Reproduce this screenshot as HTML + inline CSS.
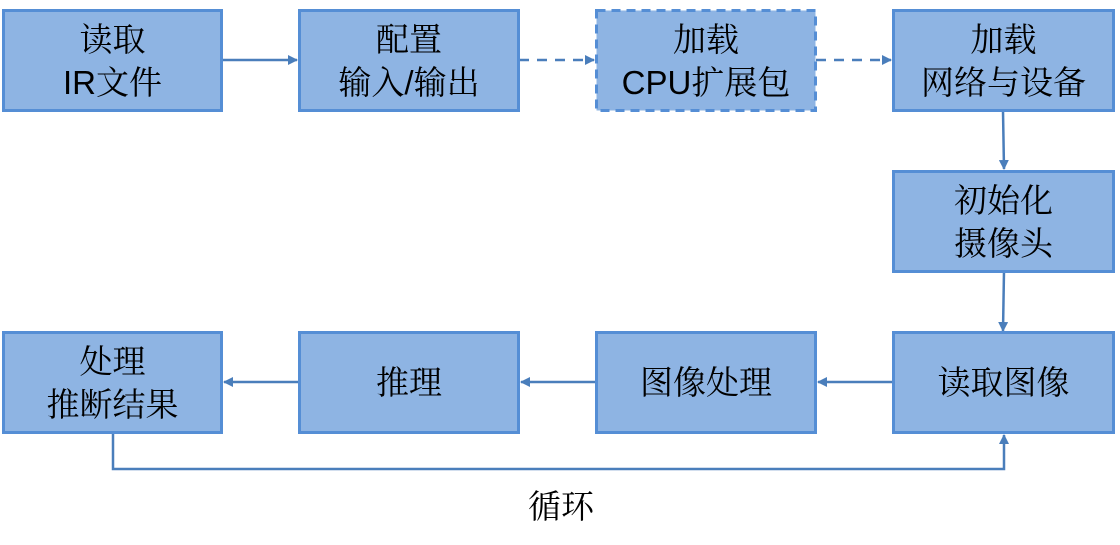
<!DOCTYPE html>
<html><head><meta charset="utf-8"><style>
body{margin:0;width:1120px;height:545px;background:#fff;position:relative;overflow:hidden;font-family:"Liberation Sans","Noto Serif CJK SC","Noto Serif CJK JP",serif;}
.b{position:absolute;box-sizing:border-box;background:#8eb4e3;border:3px solid #558ed5;display:flex;align-items:center;justify-content:center;text-align:center;font-size:33px;line-height:43px;color:#000;}
.d{border:none;background:transparent;}
.t{position:absolute;font-size:33px;}
</style></head><body>
<svg width="1120" height="545" style="position:absolute;left:0;top:0">
<defs><marker id="a" markerWidth="10" markerHeight="10" refX="9" refY="5" orient="auto" markerUnits="userSpaceOnUse"><path d="M0,0 L10,5 L0,10 z" fill="#4a7ebb"/></marker></defs>
<rect x="596.5" y="10.5" width="219" height="100" fill="#8eb4e3" stroke="#558ed5" stroke-width="3" stroke-dasharray="9,6"/>
<g stroke="#4a7ebb" stroke-width="2.5" fill="none">
<line x1="222" y1="60" x2="297" y2="60" marker-end="url(#a)"/>
<line x1="519" y1="60" x2="594" y2="60" stroke-dasharray="10,8" marker-end="url(#a)"/>
<line x1="816" y1="60" x2="891" y2="60" stroke-dasharray="10,8" marker-end="url(#a)"/>
<line x1="1003" y1="111" x2="1004" y2="169" marker-end="url(#a)"/>
<line x1="1004" y1="271" x2="1003" y2="331" marker-end="url(#a)"/>
<line x1="893" y1="382" x2="818" y2="382" marker-end="url(#a)"/>
<line x1="596" y1="382" x2="521" y2="382" marker-end="url(#a)"/>
<line x1="298" y1="382" x2="224" y2="382" marker-end="url(#a)"/>
<polyline points="113,433 113,469 1004,469 1004,435" marker-end="url(#a)"/>
</g></svg>
<div class="b" style="left:2px;top:9px;width:221px;height:103px">读取<br>IR文件</div>
<div class="b" style="left:298px;top:9px;width:222px;height:103px">配置<br>输入/输出</div>
<div class="b d" style="left:595px;top:9px;width:222px;height:103px">加载<br>CPU扩展包</div>
<div class="b" style="left:892px;top:9px;width:223px;height:103px">加载<br>网络与设备</div>
<div class="b" style="left:892px;top:170px;width:223px;height:103px">初始化<br>摄像头</div>
<div class="b" style="left:2px;top:331px;width:221px;height:103px">处理<br>推断结果</div>
<div class="b" style="left:298px;top:331px;width:222px;height:103px">推理</div>
<div class="b" style="left:595px;top:331px;width:222px;height:103px">图像处理</div>
<div class="b" style="left:892px;top:331px;width:223px;height:103px">读取图像</div>
<div class="t" style="left:528px;top:481px">循环</div>
</body></html>
